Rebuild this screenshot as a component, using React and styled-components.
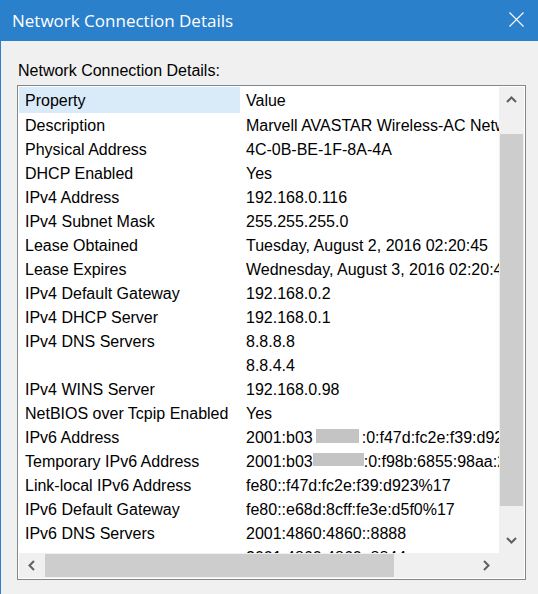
import React from 'react';
import styled, { createGlobalStyle } from 'styled-components';

const GlobalStyle = createGlobalStyle`
  html, body {
    margin: 0;
    padding: 0;
    background: #f0f0f0;
  }
`;

const rows = [
  ['Description', 'Marvell AVASTAR Wireless-AC Network Controller'],
  ['Physical Address', '4C-0B-BE-1F-8A-4A'],
  ['DHCP Enabled', 'Yes'],
  ['IPv4 Address', '192.168.0.116'],
  ['IPv4 Subnet Mask', '255.255.255.0'],
  ['Lease Obtained', 'Tuesday, August 2, 2016 02:20:45'],
  ['Lease Expires', 'Wednesday, August 3, 2016 02:20:45'],
  ['IPv4 Default Gateway', '192.168.0.2'],
  ['IPv4 DHCP Server', '192.168.0.1'],
  ['IPv4 DNS Servers', '8.8.8.8'],
  ['', '8.8.4.4'],
  ['IPv4 WINS Server', '192.168.0.98'],
  ['NetBIOS over Tcpip Enabled', 'Yes'],
  ['IPv6 Address', '2001:b03', { gap: 3, width: 43, height: 14, after: 3 }, ':0:f47d:fc2e:f39:d923'],
  ['Temporary IPv6 Address', '2001:b03', { gap: 0, width: 51, height: 13, after: 0 }, ':0:f98b:6855:98aa:2c1e'],
  ['Link-local IPv6 Address', 'fe80::f47d:fc2e:f39:d923%17'],
  ['IPv6 Default Gateway', 'fe80::e68d:8cff:fe3e:d5f0%17'],
  ['IPv6 DNS Servers', '2001:4860:4860::8888'],
  ['', '2001:4860:4860::8844'],
];

export default function App() {
  return (
    <>
      <GlobalStyle />
      <Window>
        <TitleBar>
          <Title>Network Connection Details</Title>
          <CloseButton>
            <svg width="15" height="15" viewBox="0 0 15 15">
              <path d="M0.5 0.5 L14.5 14.5 M14.5 0.5 L0.5 14.5" stroke="#fff" strokeWidth="1.1" />
            </svg>
          </CloseButton>
        </TitleBar>
        <Body>
          <Label>Network Connection Details:</Label>
          <ListBox>
            <ListArea>
              <Grid>
                <HeaderCell $active>Property</HeaderCell>
                <HeaderCell>Value</HeaderCell>
                {rows.map(([name, value, mask, rest], i) => (
                  <React.Fragment key={i}>
                    <Cell>{name}</Cell>
                    <Cell>
                      <span>{value}</span>
                      {mask && (
                        <>
                          <Mask $gap={mask.gap} $w={mask.width} $h={mask.height} />
                          <Rest $gap={mask.after}>{rest}</Rest>
                        </>
                      )}
                    </Cell>
                  </React.Fragment>
                ))}
              </Grid>
            </ListArea>
            <VScroll>
              <ArrowButton>
                <svg width="11" height="7" viewBox="0 0 11 7">
                  <polyline points="1,6 5.5,1.5 10,6" fill="none" stroke="#606060" strokeWidth="2" />
                </svg>
              </ArrowButton>
              <VTrack>
                <VThumb />
              </VTrack>
              <ArrowButton>
                <svg width="11" height="7" viewBox="0 0 11 7">
                  <polyline points="1,1 5.5,5.5 10,1" fill="none" stroke="#606060" strokeWidth="2" />
                </svg>
              </ArrowButton>
            </VScroll>
            <HScroll>
              <ArrowButton>
                <svg width="9" height="11" viewBox="0 0 9 11">
                  <polyline points="7,1 2.5,5.5 7,10" fill="none" stroke="#606060" strokeWidth="2" />
                </svg>
              </ArrowButton>
              <HTrack>
                <HThumb />
              </HTrack>
              <ArrowButton>
                <svg width="9" height="11" viewBox="0 0 9 11">
                  <polyline points="2,1 6.5,5.5 2,10" fill="none" stroke="#606060" strokeWidth="2" />
                </svg>
              </ArrowButton>
            </HScroll>
            <Corner />
          </ListBox>
        </Body>
      </Window>
    </>
  );
}

const Window = styled.div`
  width: 538px;
  height: 594px;
  display: flex;
  flex-direction: column;
  overflow: hidden;
  font-family: "Liberation Sans", Arial, sans-serif;
  font-size: 16px;
  color: #000;
`;

const TitleBar = styled.div`
  height: 41px;
  flex-shrink: 0;
  background: #2b80cc;
  display: flex;
  align-items: center;
  justify-content: space-between;
  padding: 0 14px 0 12px;
`;

const Title = styled.div`
  font-family: "Open Sans", "Noto Sans", sans-serif;
  font-size: 17px;
  color: #fff;
  margin-top: -1px;
`;

const CloseButton = styled.div`
  display: flex;
  align-items: center;
  margin-top: -2px;
`;

const Body = styled.div`
  flex: 1;
  background: #f0f0f0;
  border-left: 1px solid #2b80cc;
  padding: 20px 0 0 16px;
`;

const Label = styled.div`
  line-height: 18px;
  padding-top: 1px;
  margin: 0 0 5px 1px;
`;

const ListBox = styled.div`
  width: 505px;
  height: 491px;
  border: 1px solid #828790;
  padding: 1px;
  background: #fff;
  display: grid;
  grid-template-columns: 480px 25px;
  grid-template-rows: 466px 25px;
`;

const ListArea = styled.div`
  overflow: hidden;
`;

const Grid = styled.div`
  display: grid;
  grid-template-columns: 221px 600px;
  grid-auto-rows: 24px;
  grid-template-rows: 26px;
`;

const HeaderCell = styled.div`
  background: ${(p) => (p.$active ? '#d9ebf9' : '#fff')};
  padding: 2px 0 0 6px;
  display: flex;
  align-items: center;
  white-space: nowrap;
`;

const Cell = styled.div`
  padding: 2px 0 0 6px;
  display: flex;
  align-items: center;
  white-space: nowrap;
`;

const Mask = styled.span`
  align-self: flex-start;
  flex-shrink: 0;
  margin: 2px 0 0 ${(p) => p.$gap}px;
  width: ${(p) => p.$w}px;
  height: ${(p) => p.$h}px;
  background: #c4c4c4;
`;

const Rest = styled.span`
  margin-left: ${(p) => p.$gap}px;
`;

const VScroll = styled.div`
  background: #f0f0f0;
  display: flex;
  flex-direction: column;
`;

const HScroll = styled.div`
  background: #f0f0f0;
  display: flex;
`;

const ArrowButton = styled.div`
  width: 25px;
  height: 25px;
  flex-shrink: 0;
  display: flex;
  align-items: center;
  justify-content: center;
`;

const VTrack = styled.div`
  flex: 1;
  padding: 22px 0;
  display: flex;
`;

const VThumb = styled.div`
  flex: 1;
  margin: 0 1px;
  background: #cdcdcd;
`;

const HTrack = styled.div`
  flex: 1;
  padding: 1px 0 1px 1px;
  display: flex;
`;

const HThumb = styled.div`
  width: 349px;
  background: #cdcdcd;
`;

const Corner = styled.div`
  background: #f0f0f0;
`;
